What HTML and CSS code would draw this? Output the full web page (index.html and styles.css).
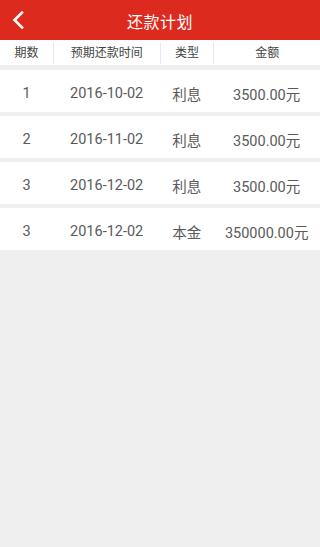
FILE: index.html
```html
<!DOCTYPE html>
<html lang="zh-CN">
<head>
<meta charset="utf-8">
<meta name="viewport" content="width=device-width, initial-scale=1">
<title>还款计划</title>
<link rel="stylesheet" href="styles.css">
</head>
<body>
<header class="topbar">
  <span class="back">
    <svg width="14" height="20" viewBox="0 0 14 20" aria-hidden="true">
      <path d="M11 2.5 L3.5 10 L11 17.5" fill="none" stroke="#fff" stroke-width="2.6" stroke-linecap="square" stroke-linejoin="miter"/>
    </svg>
  </span>
  <h1 class="title">还款计划</h1>
</header>
<div class="thead">
  <div class="th c1">期数</div>
  <div class="th c2 sep">预期还款时间</div>
  <div class="th c1 sep">类型</div>
  <div class="th c2 sep">金额</div>
</div>
<div class="rows">
  <div class="row">
    <div class="td c1">1</div><div class="td c2">2016-10-02</div><div class="td c1">利息</div><div class="td c2">3500.00元</div>
  </div>
  <div class="row">
    <div class="td c1">2</div><div class="td c2">2016-11-02</div><div class="td c1">利息</div><div class="td c2">3500.00元</div>
  </div>
  <div class="row">
    <div class="td c1">3</div><div class="td c2">2016-12-02</div><div class="td c1">利息</div><div class="td c2">3500.00元</div>
  </div>
  <div class="row">
    <div class="td c1">3</div><div class="td c2">2016-12-02</div><div class="td c1">本金</div><div class="td c2">350000.00元</div>
  </div>
</div>
</body>
</html>
```
FILE: styles.css
```css
html, body {
  margin: 0;
  padding: 0;
  height: 100%;
  background: #efefef;
  font-family: Roboto, "Noto Sans CJK SC", sans-serif;
  color: #555;
}
.topbar {
  height: 40px;
  background: #dc2a1e;
  display: flex;
  align-items: center;
  justify-content: center;
  position: relative;
}
.back {
  position: absolute;
  left: 11px;
  top: 10px;
  width: 14px;
  height: 20px;
  display: flex;
}
.title {
  margin: 0;
  font-size: 16px;
  font-weight: normal;
  color: #fff;
  letter-spacing: 0.5px;
  padding-top: 1px;
}
.thead {
  height: 25px;
  background: #fff;
  display: flex;
  align-items: center;
  margin-bottom: 5px;
}
.th {
  font-size: 12px;
  color: #444;
  text-align: center;
  line-height: 21px;
  padding-top: 1px;
}
.sep {
  border-left: 1px solid #eaeaea;
}
.c1 { flex: 1 1 0; }
.c2 { flex: 2 1 0; }
.rows {
  display: flex;
  flex-direction: column;
  gap: 4px;
}
.row {
  height: 42px;
  background: #fff;
  display: flex;
  align-items: center;
}
.td {
  font-size: 14.5px;
  text-align: center;
  color: #5a5a5a;
  padding-top: 5px;
}
```
